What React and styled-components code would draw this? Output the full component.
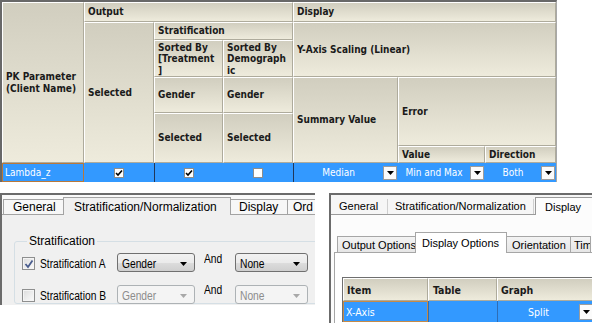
import React from 'react';
import styled, { createGlobalStyle } from 'styled-components';

const Global = createGlobalStyle`
  html, body { margin: 0; padding: 0; background: #ffffff; }
  body { width: 592px; height: 323px; overflow: hidden; }
  #root { width: 592px; height: 323px; }
`;

const Page = styled.div`
  width: 592px;
  height: 323px;
  overflow: hidden;
  display: flex;
  flex-direction: column;
`;

/* ---------- top grid ---------- */
const TopTable = styled.div`
  display: grid;
  width: 554px;
  grid-template-columns: 82px 70px 69px 70px 105px 87px 71px;
  grid-template-rows: 20px 18px 37px 36px 33px 17px 19px;
  border-top: 2px solid #686868;
  border-left: 2px solid #686868;
  border-right: 1px solid #a8a8a8;
  font-family: "DejaVu Sans Condensed", "DejaVu Sans", sans-serif;
  font-stretch: condensed;
  flex-shrink: 0;
`;

const HeadCell = styled.div`
  grid-column: ${p => p.$col} / span ${p => p.$cs || 1};
  grid-row: ${p => p.$row} / span ${p => p.$rs || 1};
  background: linear-gradient(#d1cebf, #eeebdc);
  border-top: 1px solid #ffffff;
  border-left: 1px solid #ffffff;
  border-right: 1px solid #aeab9c;
  border-bottom: 1px solid #aeab9c;
  display: flex;
  align-items: ${p => (p.$top ? 'flex-start' : 'center')};
  padding: ${p => (p.$top ? '1px 3px 0' : '0 3px')};
  font-weight: bold;
  font-size: 10px;
  line-height: ${p => (p.$top ? '11.3px' : '12px')};
  color: #1a1a1a;
  white-space: nowrap;
`;

const DataCell = styled.div`
  grid-column: ${p => p.$col};
  grid-row: 7;
  background: #3399ff;
  color: #ffffff;
  font-size: 10px;
  display: flex;
  align-items: center;
  justify-content: ${p => (p.$center ? 'center' : 'flex-start')};
  padding: ${p => (p.$focus ? '0 2px' : '0')};
  border: ${p => (p.$focus ? '1px solid #b8783a' : 'none')};
  border-left: ${p => (p.$focus ? '1px solid #b8783a' : p.$dark ? '1px solid #20375a' : 'none')};
`;

const MiniCheck = styled.span`
  width: 10px;
  height: 10px;
  box-sizing: border-box;
  background: #ffffff;
  border: 1px solid #8d8d8d;
  display: flex;
  align-items: center;
  justify-content: center;
`;

const ComboText = styled.span`
  flex: 1;
  text-align: center;
`;

const DropButton = styled.span`
  width: 14px;
  height: 14px;
  box-sizing: border-box;
  background: #fbfbfb;
  border: 1px solid #9c9c9c;
  display: flex;
  align-items: center;
  justify-content: center;
  margin-right: 1px;
  flex-shrink: 0;
`;

const Arrow = ({ color = '#000' }) => (
  <svg width="7" height="4" viewBox="0 0 7 4">
    <polygon points="0,0 7,0 3.5,4" fill={color} />
  </svg>
);

const Tick = () => (
  <svg width="8" height="8" viewBox="0 0 8 8">
    <path d="M1 4 L3 6 L7 1.5" stroke="#000" strokeWidth="1.6" fill="none" />
  </svg>
);

const GridCombo = ({ text }) => (
  <>
    <ComboText>{text}</ComboText>
    <DropButton><Arrow /></DropButton>
  </>
);

/* ---------- bottom panels ---------- */
const BottomRow = styled.div`
  display: flex;
  align-items: flex-start;
  margin-top: 11px;
  gap: 14px;
`;

const LeftPanel = styled.div`
  width: 313px;
  height: 110px;
  flex-shrink: 0;
  border-top: 2px solid #6b6b6b;
  border-left: 2px solid #6b6b6b;
  background: #fafafa;
  display: flex;
  flex-direction: column;
  overflow: hidden;
  font-family: "Liberation Sans", Arial, sans-serif;
  font-size: 12px;
  color: #000;
`;

const TabStrip = styled.div`
  height: 19px;
  display: flex;
  align-items: flex-end;
  padding-left: ${p => p.$pad ?? 1}px;
  flex-shrink: 0;
  position: relative;
  z-index: 1;
`;

const Tab = styled.div`
  width: ${p => p.$w}px;
  box-sizing: border-box;
  flex-shrink: 0;
  border: 1px solid #a3a3a3;
  border-bottom: none;
  margin-left: ${p => (p.$first ? 0 : -1)}px;
  margin-bottom: ${p => (p.$active ? -1 : 0)}px;
  background: ${p => (p.$active ? '#f0f0f0' : '#f7f7f7')};
  height: ${p => (p.$active ? 18 : 15)}px;
  padding-left: ${p => p.$tx}px;
  padding-top: ${p => (p.$active ? 3 : 1)}px;
  white-space: nowrap;
  line-height: 13px;
`;

const LeftContent = styled.div`
  flex: 1;
  background: #f0f0f0;
  border-top: 1px solid #a3a3a3;
  padding: 19px 0 0 12px;
`;

const GroupBox = styled.fieldset`
  margin: 0;
  width: 340px;
  border: 1px solid #d5dfe5;
  border-radius: 3px;
  padding: 5px 0 0 7px;
  display: flex;
  flex-direction: column;
  gap: 14px;
  legend {
    padding: 0 2px;
    margin-left: 5px;
    font-size: 12px;
    line-height: 14px;
  }
`;

const StratRow = styled.div`
  display: flex;
  align-items: center;
  height: 18px;
  font-size: 12.5px;
`;

const Squeeze = styled.span`
  display: inline-block;
  white-space: nowrap;
  transform: scaleX(0.82);
  transform-origin: left center;
`;

const WinCheck = styled.span`
  width: 13px;
  height: 13px;
  box-sizing: border-box;
  border: 1px solid #8e8f8f;
  background: linear-gradient(135deg, #dcdcdc, #fbfbfb);
  box-shadow: inset 0 0 0 1px #f4f4f4;
  display: flex;
  align-items: center;
  justify-content: center;
  margin-top: 3px;
  flex-shrink: 0;
`;

const RowLabel = styled.span`
  width: 77px;
  margin-left: 5px;
  margin-top: 3px;
  flex-shrink: 0;
`;

const Combo = styled.div`
  width: ${p => p.$w}px;
  height: 19px;
  box-sizing: border-box;
  border: 1px solid ${p => (p.$disabled ? '#adb2b5' : '#707070')};
  border-radius: 3px;
  background: ${p =>
    p.$disabled
      ? '#f4f4f4'
      : 'linear-gradient(#f2f2f2 0%, #ebebeb 50%, #dddddd 51%, #cfcfcf 100%)'};
  color: ${p => (p.$disabled ? '#8c8c8c' : '#000')};
  display: flex;
  align-items: center;
  padding: 3px 7px 0 4px;
  justify-content: space-between;
  flex-shrink: 0;
`;

const AndLabel = styled.span`
  width: 31px;
  margin-left: 9px;
  align-self: flex-start;
  margin-top: ${p => p.$up}px;
  flex-shrink: 0;
`;

const RightPanel = styled.div`
  width: 263px;
  height: 130px;
  flex-shrink: 0;
  border-top: 2px solid #6b6b6b;
  border-left: 2px solid #6b6b6b;
  background: #f6f6f6;
  display: flex;
  flex-direction: column;
  overflow: hidden;
  font-family: "Liberation Sans", Arial, sans-serif;
  font-size: 11px;
  color: #000;
`;

const FlatTab = styled.div`
  width: ${p => p.$w}px;
  height: ${p => (p.$active ? 18 : 15)}px;
  box-sizing: border-box;
  flex-shrink: 0;
  padding-left: ${p => p.$tx}px;
  padding-top: ${p => (p.$active ? 3 : 1)}px;
  white-space: nowrap;
  line-height: 13px;
  border-right: 1px solid ${p => (p.$active ? '#9a9a9a' : '#cfcfcf')};
  border-left: ${p => (p.$active ? '1px solid #9a9a9a' : 'none')};
  border-top: ${p => (p.$active ? '1px solid #9a9a9a' : 'none')};
  background: ${p => (p.$active ? '#fcfcfc' : 'transparent')};
  margin-bottom: ${p => (p.$active ? -1 : 0)}px;
  margin-left: ${p => p.$ml || 0}px;
`;

const RightContent = styled.div`
  flex: 1;
  background: #fcfcfc;
  border-top: 1px solid #9a9a9a;
  padding: 17px 0 0 3px;
  display: flex;
  flex-direction: column;
`;

const InnerStrip = styled.div`
  height: 20px;
  display: flex;
  align-items: flex-end;
  padding-left: 3px;
  position: relative;
  z-index: 1;
`;

const InnerTab = styled.div`
  width: ${p => p.$w}px;
  height: ${p => (p.$active ? 21 : 16)}px;
  box-sizing: border-box;
  flex-shrink: 0;
  border: 1px solid #a6a6a6;
  border-bottom: none;
  margin-left: ${p => (p.$first ? 0 : -1)}px;
  margin-bottom: ${p => (p.$active ? -1 : 0)}px;
  background: ${p => (p.$active ? '#ffffff' : 'linear-gradient(#f3f3f3, #e6e6e6)')};
  padding-left: ${p => p.$tx}px;
  padding-top: ${p => (p.$active ? 4 : 2)}px;
  white-space: nowrap;
  overflow: hidden;
  line-height: 13px;
  font-size: 11px;
`;

const InnerContent = styled.div`
  flex: 1;
  background: #ffffff;
  border-top: 1px solid #a6a6a6;
  border-left: 1px solid #a6a6a6;
  padding: 24px 0 0 7px;
`;

const ItemGrid = styled.div`
  display: grid;
  grid-template-columns: 85px 69px 100px;
  grid-template-rows: 23px 21px;
  width: 254px;
  border-top: 1px solid #6f6f6f;
  border-left: 1px solid #6f6f6f;
  font-family: "DejaVu Sans Condensed", "DejaVu Sans", sans-serif;
  font-stretch: condensed;
  font-size: 10.5px;
`;

const ItemHead = styled.div`
  background: linear-gradient(#d1cebf, #eeebdc);
  border-top: 1px solid #ffffff;
  border-left: 1px solid #ffffff;
  border-right: 1px solid #aeab9c;
  border-bottom: 1px solid #aeab9c;
  display: flex;
  align-items: center;
  padding-left: ${p => p.$tx}px;
  font-weight: bold;
  color: #1a1a1a;
`;

const ItemData = styled.div`
  background: #3399ff;
  color: #ffffff;
  display: flex;
  align-items: center;
  padding-left: ${p => (p.$focus ? 2 : 0)}px;
  border: ${p => (p.$focus ? '1px solid #c58a48' : 'none')};
  border-left: ${p => (p.$focus ? '1px solid #c58a48' : '1px solid #2f6db5')};
`;

const SplitText = styled.span`
  width: 81px;
  text-align: center;
`;

const ItemDrop = styled(DropButton)`
  width: 15px;
  height: 16px;
`;

const BlueTick = () => (
  <svg width="10" height="10" viewBox="0 0 10 10">
    <path d="M1.5 5 L4 8 L8.5 1.5" stroke="#4a5d8e" strokeWidth="1.8" fill="none" />
  </svg>
);

export default function App() {
  return (
    <>
      <Global />
      <Page>
        <TopTable>
          <HeadCell $col={1} $row={1} $rs={6}>PK Parameter<br />(Client Name)</HeadCell>
          <HeadCell $col={2} $cs={3} $row={1}>Output</HeadCell>
          <HeadCell $col={2} $row={2} $rs={5}>Selected</HeadCell>
          <HeadCell $col={3} $cs={2} $row={2}>Stratification</HeadCell>
          <HeadCell $col={3} $row={3} $top>Sorted By<br />[Treatment<br />]</HeadCell>
          <HeadCell $col={4} $row={3} $top>Sorted By<br />Demograph<br />ic</HeadCell>
          <HeadCell $col={3} $row={4}>Gender</HeadCell>
          <HeadCell $col={4} $row={4}>Gender</HeadCell>
          <HeadCell $col={3} $row={5} $rs={2}>Selected</HeadCell>
          <HeadCell $col={4} $row={5} $rs={2}>Selected</HeadCell>
          <HeadCell $col={5} $cs={3} $row={1}>Display</HeadCell>
          <HeadCell $col={5} $cs={3} $row={2} $rs={2}>Y-Axis Scaling (Linear)</HeadCell>
          <HeadCell $col={5} $row={4} $rs={3}>Summary Value</HeadCell>
          <HeadCell $col={6} $cs={2} $row={4} $rs={2}>Error</HeadCell>
          <HeadCell $col={6} $row={6}>Value</HeadCell>
          <HeadCell $col={7} $row={6}>Direction</HeadCell>

          <DataCell $col={1} $focus>Lambda_z</DataCell>
          <DataCell $col={2} $center><MiniCheck><Tick /></MiniCheck></DataCell>
          <DataCell $col={3} $center $dark><MiniCheck><Tick /></MiniCheck></DataCell>
          <DataCell $col={4} $center><MiniCheck /></DataCell>
          <DataCell $col={5} $dark><GridCombo text="Median" /></DataCell>
          <DataCell $col={6}><GridCombo text="Min and Max" /></DataCell>
          <DataCell $col={7}><GridCombo text="Both" /></DataCell>
        </TopTable>

        <BottomRow>
          <LeftPanel>
            <TabStrip>
              <Tab $w={61} $tx={9} $first>General</Tab>
              <Tab $w={168} $tx={10} $active>Stratification/Normalization</Tab>
              <Tab $w={58} $tx={8}>Display</Tab>
              <Tab $w={40} $tx={5}>Ord</Tab>
            </TabStrip>
            <LeftContent>
              <GroupBox>
                <legend>Stratification</legend>
                <StratRow>
                  <WinCheck><BlueTick /></WinCheck>
                  <RowLabel><Squeeze>Stratification A</Squeeze></RowLabel>
                  <Combo $w={78}>
                    <Squeeze>Gender</Squeeze>
                    <Arrow />
                  </Combo>
                  <AndLabel $up={-1}><Squeeze>And</Squeeze></AndLabel>
                  <Combo $w={73}>
                    <Squeeze>None</Squeeze>
                    <Arrow />
                  </Combo>
                </StratRow>
                <StratRow>
                  <WinCheck />
                  <RowLabel><Squeeze>Stratification B</Squeeze></RowLabel>
                  <Combo $w={78} $disabled>
                    <Squeeze>Gender</Squeeze>
                    <Arrow color="#a8a8a8" />
                  </Combo>
                  <AndLabel $up={-2}><Squeeze>And</Squeeze></AndLabel>
                  <Combo $w={73} $disabled>
                    <Squeeze>None</Squeeze>
                    <Arrow color="#a8a8a8" />
                  </Combo>
                </StratRow>
              </GroupBox>
            </LeftContent>
          </LeftPanel>

          <RightPanel>
            <TabStrip $pad={0}>
              <FlatTab $w={57} $tx={8}>General</FlatTab>
              <FlatTab $w={145} $tx={6} $ml={1}>Stratification/Normalization</FlatTab>
              <FlatTab $w={58} $tx={9} $ml={1} $active>Display</FlatTab>
            </TabStrip>
            <RightContent>
              <InnerStrip>
                <InnerTab $w={79} $tx={4} $first>Output Options</InnerTab>
                <InnerTab $w={92} $tx={6} $active>Display Options</InnerTab>
                <InnerTab $w={65} $tx={5}>Orientation</InnerTab>
                <InnerTab $w={21} $tx={3}>Tim</InnerTab>
              </InnerStrip>
              <InnerContent>
                <ItemGrid>
                  <ItemHead $tx={3}>Item</ItemHead>
                  <ItemHead $tx={4}>Table</ItemHead>
                  <ItemHead $tx={3}>Graph</ItemHead>
                  <ItemData $focus>X-Axis</ItemData>
                  <ItemData />
                  <ItemData>
                    <SplitText>Split</SplitText>
                    <ItemDrop><Arrow /></ItemDrop>
                  </ItemData>
                </ItemGrid>
              </InnerContent>
            </RightContent>
          </RightPanel>
        </BottomRow>
      </Page>
    </>
  );
}
